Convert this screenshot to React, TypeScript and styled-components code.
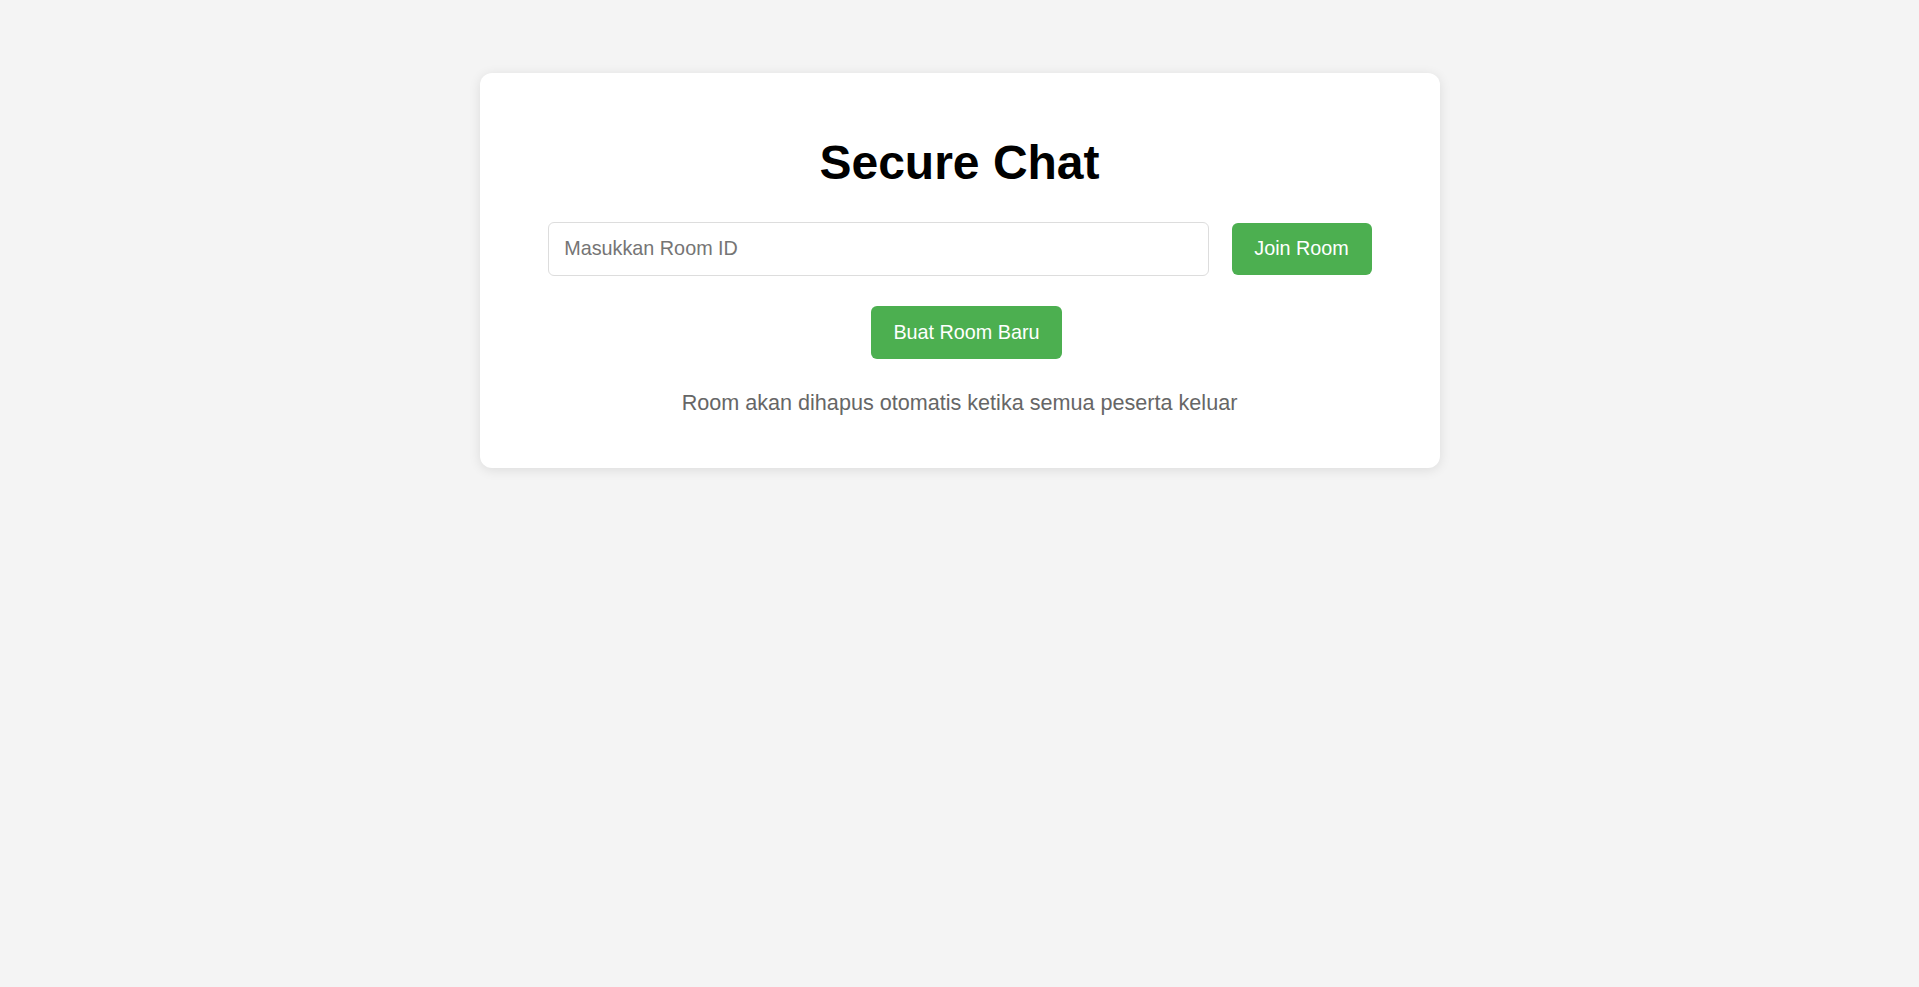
import React, { useState } from "react";
import styled, { createGlobalStyle } from "styled-components";

const GlobalStyle = createGlobalStyle`
  html, body {
    margin: 0;
    padding: 0;
    background: #f4f4f4;
    font-family: "Liberation Sans", Arial, sans-serif;
  }
  * { box-sizing: border-box; }
`;

const Page = styled.main`
  min-height: 987px;
  padding-top: 72.5px;
  display: flex;
  flex-direction: column;
  align-items: center;
`;

const Card = styled.section`
  width: 960px;
  background: #ffffff;
  border-radius: 12px;
  box-shadow: 0 2px 12px rgba(0, 0, 0, 0.1);
  padding: 30px 68px 30px;
  display: flex;
  flex-direction: column;
  align-items: stretch;
`;

const Title = styled.h1`
  margin: 32px 0 32px;
  font-size: 48px;
  font-weight: 700;
  line-height: normal;
  color: #000;
  text-align: center;
`;

const JoinRow = styled.div`
  display: flex;
  align-items: center;
  gap: 22.3px;
`;

const RoomInput = styled.input`
  flex: 1;
  height: 54.4px;
  padding: 0 15.7px;
  border: 1px solid #dddddd;
  border-radius: 6px;
  font-family: "Liberation Sans", Arial, sans-serif;
  font-size: 19.8px;
  color: #333;
  outline: none;
  &::placeholder {
    color: #757575;
  }
`;

const GreenButton = styled.button<{ $shift?: number }>`
  height: 52.4px;
  padding: 0 22.7px;
  margin-left: ${(p) => p.$shift ?? 0}px;
  border: none;
  border-radius: 6px;
  background: #4caf50;
  color: #ffffff;
  font-family: "Liberation Sans", Arial, sans-serif;
  font-size: 19.8px;
  line-height: 1;
  cursor: pointer;
  white-space: nowrap;
`;

const CreateRow = styled.div`
  display: flex;
  justify-content: center;
  margin-top: 30.6px;
`;

const Note = styled.p`
  margin: 31.6px 0 21.6px;
  font-size: 21.6px;
  line-height: normal;
  color: #666666;
  text-align: center;
`;

export default function App() {
  const [roomId, setRoomId] = useState("");
  return (
    <>
      <GlobalStyle />
      <Page>
        <Card>
          <Title>Secure Chat</Title>
          <JoinRow>
            <RoomInput
              type="text"
              placeholder="Masukkan Room ID"
              value={roomId}
              onChange={(e) => setRoomId(e.target.value)}
            />
            <GreenButton>Join Room</GreenButton>
          </JoinRow>
          <CreateRow>
            <GreenButton $shift={14}>Buat Room Baru</GreenButton>
          </CreateRow>
          <Note>Room akan dihapus otomatis ketika semua peserta keluar</Note>
        </Card>
      </Page>
    </>
  );
}
